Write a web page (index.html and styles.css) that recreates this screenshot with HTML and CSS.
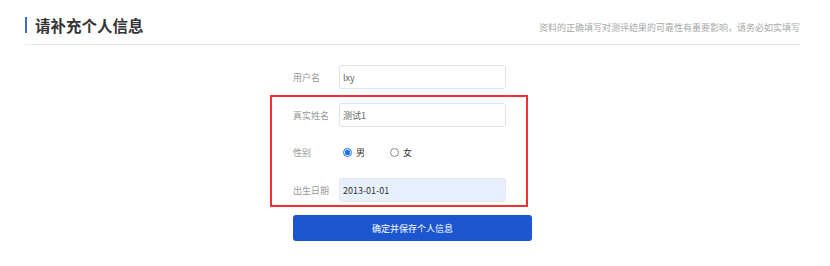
FILE: index.html
```html
<!DOCTYPE html>
<html lang="zh-CN">
<head>
    <meta charset="UTF-8">
    <meta name="viewport" content="width=device-width, initial-scale=1.0">
    <title>请补充个人信息</title>
    <link rel="stylesheet" href="styles.css">
</head>
<body>
    <div class="page">
        <!-- Header -->
        <div class="header">
            <h1 class="title">请补充个人信息</h1>
            <div class="note">资料的正确填写对测评结果的可靠性有重要影响，请务必如实填写</div>
        </div>

        <!-- Info Form -->
        <form class="info-form">
            <div class="row row-plain">
                <label class="label">用户名</label>
                <input class="field" type="text" value="lxy">
            </div>

            <div class="highlight">
                <div class="row">
                    <label class="label">真实姓名</label>
                    <input class="field" type="text" value="测试1">
                </div>
                <div class="row row-gap">
                    <label class="label">性别</label>
                    <div class="radios">
                        <span class="radio checked"></span><span class="radio-text">男</span>
                        <span class="radio"></span><span class="radio-text">女</span>
                    </div>
                </div>
                <div class="row row-gap row-date">
                    <label class="label">出生日期</label>
                    <input class="field field-filled" type="text" value="2013-01-01">
                </div>
            </div>

            <button type="button" class="submit">确定并保存个人信息</button>
        </form>
    </div>
</body>
</html>
```

FILE: styles.css
```css
body {
    margin: 0;
    background: #fff;
    font-family: "Noto Sans CJK SC", "Noto Sans", sans-serif;
}

.page {
    padding: 0 30px 0 25px;
}

/* Header */
.header {
    display: flex;
    justify-content: space-between;
    align-items: flex-start;
    padding: 17px 0 10px;
    border-bottom: 1px solid #e8e8e8;
}

.title {
    margin: 0;
    padding-left: 8px;
    border-left: 2px solid #3b6db3;
    font-size: 15.5px;
    line-height: 16px;
    font-weight: bold;
    color: #333;
}

.note {
    margin-top: 5px;
    font-size: 9px;
    line-height: 12px;
    color: #a8a8a8;
}

/* Form */
.info-form {
    width: 262px;
    margin: 20px 0 0 245px;
}

.row {
    display: flex;
    align-items: center;
    height: 24px;
}

.row-plain {
    padding-left: 23px;
}

.row-gap {
    margin-top: 13px;
}

.row-date {
    margin-top: 14px;
}

.label {
    width: 46px;
    font-size: 9px;
    color: #999;
}

.field {
    box-sizing: border-box;
    width: 167px;
    height: 24px;
    padding: 0 3px;
    border: 1px solid #e2e2e2;
    border-radius: 3px;
    font-family: inherit;
    font-size: 9px;
    color: #666;
    outline: none;
}

.field-filled {
    background: #e8f0fe;
    border-color: #e3e8f2;
    color: #333;
}

.highlight {
    box-sizing: border-box;
    width: 258px;
    margin-top: 6px;
    padding: 6px 20px 3px 21px;
    border: 2px solid #f23030;
}

.radios {
    display: flex;
    align-items: center;
    padding-left: 4px;
}

.radio {
    box-sizing: border-box;
    width: 9px;
    height: 9px;
    border: 1px solid #888;
    border-radius: 50%;
}

.radio.checked {
    border-color: #1a73e8;
    background: radial-gradient(circle, #1a73e8 0 2.5px, #fff 3px);
}

.radio-text {
    margin: 0 25px 0 4px;
    font-size: 9px;
    color: #333;
}

.submit {
    display: block;
    width: 239px;
    height: 26px;
    margin: 8px 0 0 23px;
    border: none;
    border-radius: 3px;
    background: #1b56cf;
    color: #fff;
    font-family: inherit;
    font-size: 9px;
    cursor: pointer;
}
```
